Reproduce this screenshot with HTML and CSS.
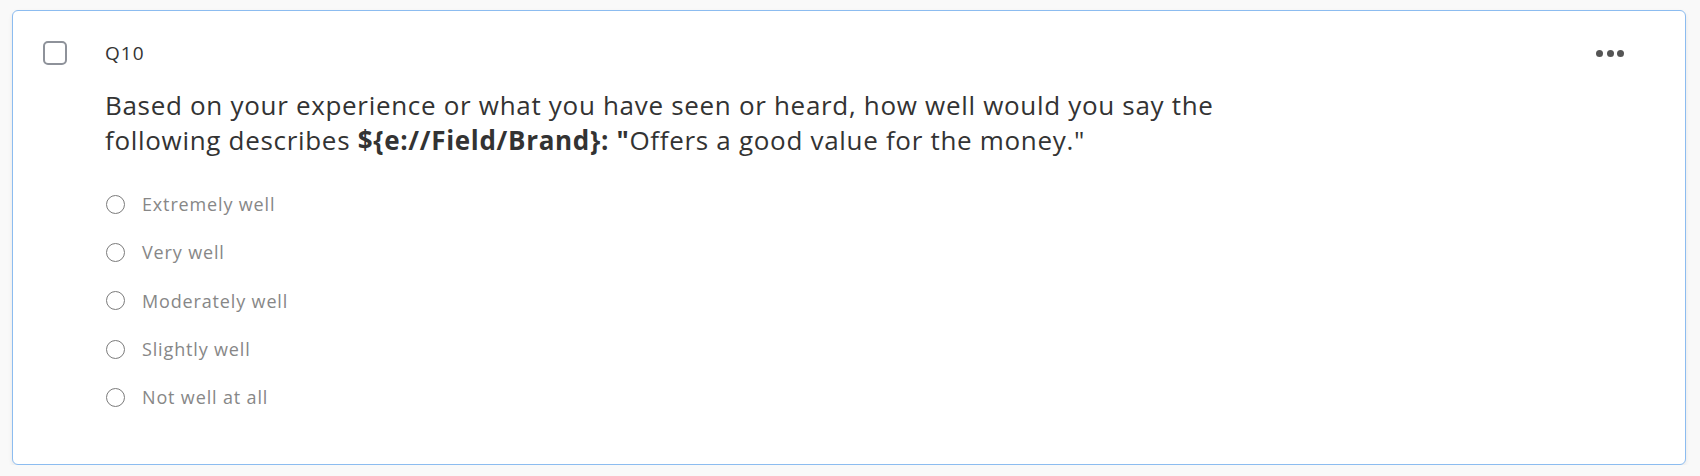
FILE: index.html
```html
<!DOCTYPE html>
<html>
<head>
<meta charset="utf-8">
<link rel="stylesheet" href="styles.css">
</head>
<body>
<div class="card">
  <div class="card-head">
    <span class="select-box"></span>
    <span class="qid">Q10</span>
    <span class="more"><i></i><i></i><i></i></span>
  </div>
  <div class="card-body">
    <p class="question">Based on your experience or what you have seen or heard, how well would you say the<br>following describes <b>${e://Field/Brand}: "</b>Offers a good value for the money."</p>
    <ul class="choices">
      <li class="choice"><span class="radio"></span><span class="label">Extremely well</span></li>
      <li class="choice"><span class="radio"></span><span class="label">Very well</span></li>
      <li class="choice"><span class="radio"></span><span class="label">Moderately well</span></li>
      <li class="choice"><span class="radio"></span><span class="label">Slightly well</span></li>
      <li class="choice"><span class="radio"></span><span class="label">Not well at all</span></li>
    </ul>
  </div>
</div>
</body>
</html>
```
FILE: styles.css
```css
html, body {
  margin: 0;
  padding: 0;
  background: #f9f9f9;
}
body {
  padding: 10px 14px 0 12px;
  font-family: "Open Sans", "Noto Sans", sans-serif;
  color: #333;
}
.card {
  height: 455px;
  box-sizing: border-box;
  background: #fff;
  border: 1px solid #8cbcf0;
  border-radius: 6px;
  box-shadow: 0 2px 4px rgba(0,0,0,0.08);
  padding: 30px 0 0 30px;
}
.card-head {
  display: flex;
  align-items: center;
  height: 24px;
}
.select-box {
  width: 24px;
  height: 24px;
  box-sizing: border-box;
  border: 2px solid #8e929a;
  border-radius: 5px;
}
.qid {
  margin-left: 38px;
  font-size: 19px;
  letter-spacing: 1px;
  color: #333;
}
.more {
  margin-left: auto;
  margin-right: 61px;
  display: flex;
  gap: 3.5px;
}
.more i {
  display: block;
  width: 7px;
  height: 7px;
  border-radius: 50%;
  background: #555;
}
.card-body {
  padding-left: 62px;
}
.question {
  margin: 23px 0 0 0;
  font-size: 26px;
  letter-spacing: 0.69px;
  line-height: 35px;
  color: #333;
}
.question b {
  font-weight: 700;
}
.choices {
  list-style: none;
  margin: 22px 0 0 0;
  padding: 0;
}
.choice {
  display: flex;
  align-items: center;
  height: 48.3px;
}
.radio {
  width: 19px;
  height: 19px;
  box-sizing: border-box;
  border: 1.5px solid #7b7b7b;
  border-radius: 50%;
  margin-left: 1px;
}
.label {
  margin-left: 17px;
  font-size: 18px;
  letter-spacing: 0.85px;
  color: #878787;
}
```
